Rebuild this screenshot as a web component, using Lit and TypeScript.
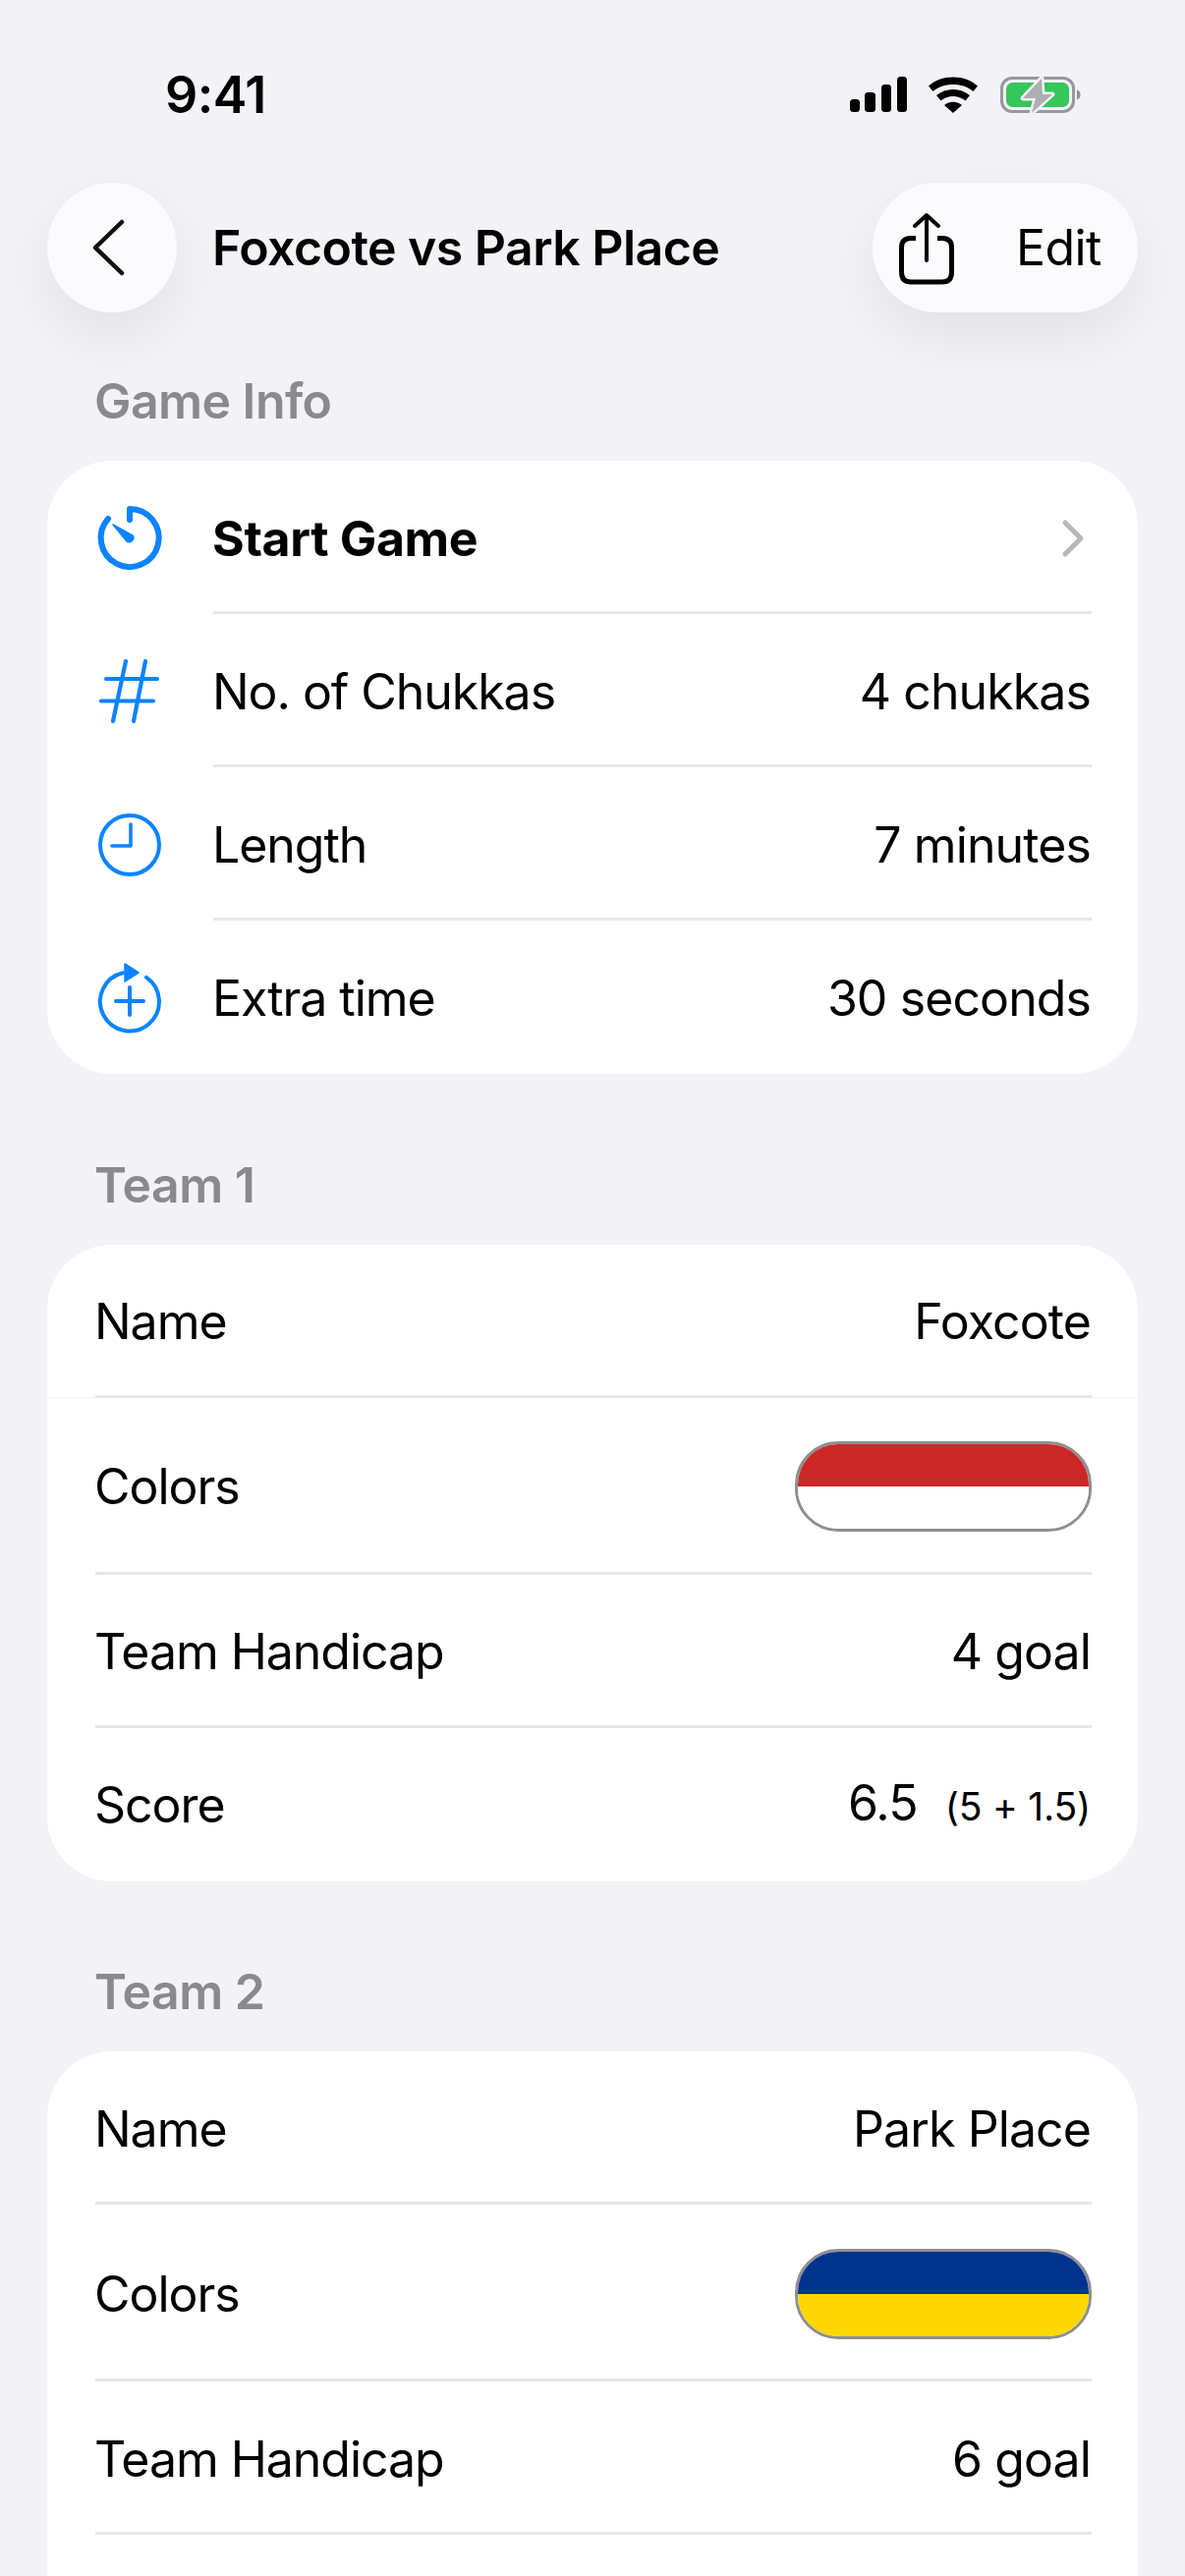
import { LitElement, html, css, svg } from "lit";
import { customElement } from "lit/decorators.js";

type Row = { label: string; value?: string; extra?: string; colors?: [string, string] };

const icons = {
  timer: svg`<path d="M33 5V15M33 4A29.500 29.500 0 1 1 11 14" fill="none" stroke="#0a84ff" stroke-width="6" stroke-linecap="round"/><path d="M16 20 36.500 31.500a4.500 4.500 0 0 1-6.500 5.500z" fill="#0a84ff" stroke="#0a84ff" stroke-width="1.500" stroke-linejoin="round"/>`,
  hash: svg`<path d="M29 3 16 64M49 3 37 64M9 21H61M4 43.500H57" fill="none" stroke="#0a84ff" stroke-width="4.200" stroke-linecap="round"/>`,
  clock: svg`<circle cx="33" cy="34" r="30" fill="none" stroke="#0a84ff" stroke-width="4"/><path d="M34 13V35H15" fill="none" stroke="#0a84ff" stroke-width="3.600" stroke-linecap="round" stroke-linejoin="round"/>`,
  extra: svg`<path d="M26 8.300A30 30 0 1 0 50 12.800" fill="none" stroke="#0a84ff" stroke-width="4" stroke-linecap="round"/><path d="M28 -1 42 8 28 17z" fill="#0a84ff" stroke="#0a84ff" stroke-width="1.500" stroke-linejoin="round"/><path d="M19 37H47M33 23V51" fill="none" stroke="#0a84ff" stroke-width="4" stroke-linecap="round"/>`,
};

@customElement("app-root")
export class AppRoot extends LitElement {
  static styles = css`
    :host { display: block; width: 1206px; height: 2622px; overflow: hidden; background: #f2f2f7; font-family: Inter, "Liberation Sans", sans-serif; color: #000; }
    .status { height: 186px; box-sizing: border-box; padding: 70px 0 0 168px; display: flex; align-items: flex-start; }
    .time { font-size: 52px; font-weight: 600; line-height: 54px; letter-spacing: -0.5px; width: 697px; }
    .status svg { display: block; margin-top: 8px; }
    .nav { height: 132px; padding: 0 48px; display: flex; align-items: center; }
    .glass { background: #fbfbfe; box-shadow: 0 24px 60px rgba(0, 0, 0, 0.07); height: 132px; border-radius: 66px; display: flex; align-items: center; box-sizing: border-box; }
    .back { width: 132px; padding-left: 45px; }
    .title { flex: 1; margin-left: 36px; font-size: 50px; font-weight: 600; letter-spacing: -0.55px; line-height: 60px; }
    .actions { width: 270px; padding-left: 25px; }
    .edit { font-size: 50px; margin-left: 61px; letter-spacing: -0.6px; line-height: 60px; }
    section { margin-top: 82.5px; padding: 0 48px; }
    section.first { margin-top: 60px; }
    h2 { margin: 0; padding: 0 0 31px 48px; font-size: 50px; line-height: 60px; font-weight: 600; color: #8a8a8e; letter-spacing: -0.55px; }
    .card { background: #fff; border-radius: 66px; overflow: hidden; }
    .row { height: 156px; display: flex; align-items: stretch; box-sizing: border-box; }
    .row.tall { height: 180px; }
    .row.hair { box-shadow: inset 0 -1px 0 #f3f3f5; }
    .icon { width: 169px; display: flex; align-items: center; justify-content: center; padding-right: 1px; box-sizing: border-box; flex: none; }
    .body { flex: 1; display: flex; align-items: center; justify-content: space-between; margin-right: 47px; padding-top: 4px; border-bottom: 3px solid #e6e6e8; min-width: 0; }
    .row.plain .body { margin-left: 49px; }
    .row:last-child .body { border-bottom-color: transparent; }
    .label { font-size: 50px; line-height: 60px; letter-spacing: -1.05px; margin-left: -1px; }
    .label.strong { font-weight: 700; letter-spacing: -0.35px; }
    .value { font-size: 50px; line-height: 60px; letter-spacing: -0.9px; margin-right: 1px; display: flex; align-items: baseline; }
    .extra { font-size: 39px; margin-left: 28px; letter-spacing: -0.2px; }
    .chev { margin-right: 6px; }
    .swatch { width: 302px; height: 92px; box-sizing: border-box; border: 3px solid #8e8e93; border-radius: 44px; overflow: hidden; display: flex; flex-direction: column; }
    .swatch i { flex: 1; display: block; }
  `;

  private game = [
    { icon: "timer", label: "Start Game", strong: true, chevron: true },
    { icon: "hash", label: "No. of Chukkas", value: "4 chukkas" },
    { icon: "clock", label: "Length", value: "7 minutes" },
    { icon: "extra", label: "Extra time", value: "30 seconds" },
  ];

  private team1: Row[] = [
    { label: "Name", value: "Foxcote" },
    { label: "Colors", colors: ["#cb2727", "#ffffff"] },
    { label: "Team Handicap", value: "4 goal" },
    { label: "Score", value: "6.5", extra: "(5 + 1.5)" },
  ];

  private team2: Row[] = [
    { label: "Name", value: "Park Place" },
    { label: "Colors", colors: ["#00338d", "#ffd700"] },
    { label: "Team Handicap", value: "6 goal" },
    { label: "" },
  ];

  private teamRow(r: Row, hair: boolean) {
    return html`<div class="row plain ${r.colors ? "tall" : ""} ${hair ? "hair" : ""}">
      <div class="body">
        <span class="label">${r.label}</span>
        ${r.colors
          ? html`<div class="swatch"><i style="background:${r.colors[0]}"></i><i style="background:${r.colors[1]}"></i></div>`
          : html`<span class="value">${r.value}${r.extra ? html`<span class="extra">${r.extra}</span>` : ""}</span>`}
      </div>
    </div>`;
  }

  render() {
    return html`
      <div class="status">
        <div class="time">9:41</div>
        <svg width="240" height="44" viewBox="0 0 240 44" style="overflow:visible">
          <g fill="#000">
            <rect x="0" y="23" width="10" height="13" rx="3.500"/>
            <rect x="15" y="16" width="11" height="20" rx="3.500"/>
            <rect x="32" y="8" width="10" height="28" rx="3.500"/>
            <rect x="48" y="0" width="10" height="36" rx="3.500"/>
            <path d="M80 9.500C87 3.500 95 .5 105 .5s18 3 25 9l-4.500 5.500C120 10.500 113 8 105 8s-15 2.500-20.500 7z"/>
            <path d="M88 19c5-4 10.500-6 17-6s12 2 17 6l-4.500 5.500c-4-3-8-4.500-12.500-4.500s-8.500 1.500-12.500 4.500z"/>
            <path d="M96 29c3-2.300 5.800-3.200 9-3.200s6 .9 9 3.200L105 37z"/>
          </g>
          <rect x="154.500" y="1.500" width="73" height="34" rx="10.500" fill="none" stroke="#98989c" stroke-width="3"/>
          <rect x="159" y="6" width="64" height="25" rx="6.500" fill="#34c759"/>
          <path d="M231 13.500c2.500 .8 3.500 2.500 3.500 5s-1 4.200-3.500 5z" fill="#8e8e93"/>
          <path d="M195 2 176 22H189L185 37 206 18H196z" fill="#aeaeb2" stroke="#f2f2f7" stroke-width="5" stroke-linejoin="round" paint-order="stroke"/>
        </svg>
      </div>
      <div class="nav">
        <div class="glass back">
          <svg width="36" height="58" viewBox="0 0 36 58"><path d="M31 3 4 29 31 55" fill="none" stroke="#111" stroke-width="4.500" stroke-linecap="round" stroke-linejoin="round"/></svg>
        </div>
        <div class="title">Foxcote vs Park Place</div>
        <div class="glass actions">
          <svg width="60" height="76" viewBox="0 0 60 76"><path d="M19 28.500H14C7.500 28.500 4.500 31.500 4.500 38V63C4.500 69.500 7.500 73 14 73H46C52.500 73 55.500 69.500 55.500 63V38C55.500 31.500 52.500 28.500 46 28.500H41" fill="none" stroke="#000" stroke-width="5"/><path d="M30 51V5M18 16 30 5 42 16" fill="none" stroke="#000" stroke-width="4" stroke-linecap="round" stroke-linejoin="round"/></svg>
          <span class="edit">Edit</span>
        </div>
      </div>

      <section class="first">
        <h2>Game Info</h2>
        <div class="card">
          ${this.game.map(
            (g) => html`<div class="row">
              <div class="icon"><svg width="66" height="66" viewBox="0 0 66 66" style="overflow:visible">${icons[g.icon as keyof typeof icons]}</svg></div>
              <div class="body">
                <span class="label ${g.strong ? "strong" : ""}">${g.label}</span>
                ${g.chevron
                  ? html`<svg class="chev" width="26" height="40" viewBox="0 0 26 40"><path d="M5 4 21 20 5 36" fill="none" stroke="#b8b8bc" stroke-width="5" stroke-linecap="round" stroke-linejoin="round"/></svg>`
                  : html`<span class="value">${g.value}</span>`}
              </div>
            </div>`
          )}
        </div>
      </section>

      <section>
        <h2>Team 1</h2>
        <div class="card">${this.team1.map((r, i) => this.teamRow(r, i === 0))}</div>
      </section>

      <section>
        <h2>Team 2</h2>
        <div class="card">${this.team2.map((r) => this.teamRow(r, false))}</div>
      </section>
    `;
  }
}
